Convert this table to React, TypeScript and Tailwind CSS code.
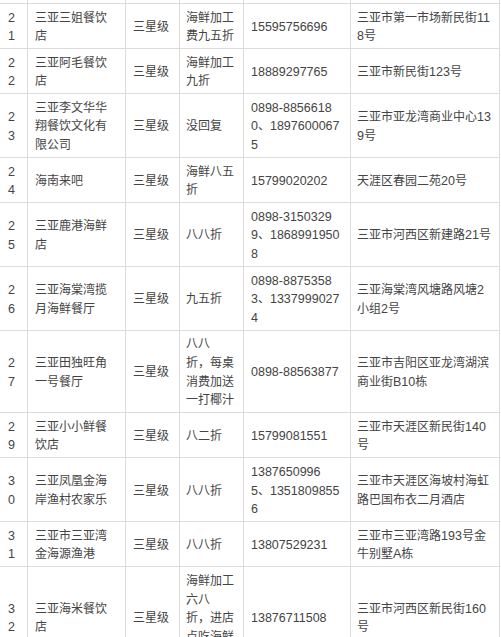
type Row = string[][];

// each cell is written as its wrapped lines, as they break in the source table
const rows: Row[] = [
  [["2", "1"], ["三亚三姐餐饮", "店"], ["三星级"], ["海鲜加工", "费九五折"], ["15595756696"], ["三亚市第一市场新民街11", "8号"]],
  [["2", "2"], ["三亚阿毛餐饮", "店"], ["三星级"], ["海鲜加工", "九折"], ["18889297765"], ["三亚市新民街123号"]],
  [
    ["2", "3"],
    ["三亚李文华华", "翔餐饮文化有", "限公司"],
    ["三星级"],
    ["没回复"],
    ["0898-8856618", "0、1897600067", "5"],
    ["三亚市亚龙湾商业中心13", "9号"],
  ],
  [["2", "4"], ["海南来吧"], ["三星级"], ["海鲜八五", "折"], ["15799020202"], ["天涯区春园二苑20号"]],
  [["2", "5"], ["三亚鹿港海鲜", "店"], ["三星级"], ["八八折"], ["0898-3150329", "9、1868991950", "8"], ["三亚市河西区新建路21号"]],
  [
    ["2", "6"],
    ["三亚海棠湾揽", "月海鲜餐厅"],
    ["三星级"],
    ["九五折"],
    ["0898-8875358", "3、1337999027", "4"],
    ["三亚海棠湾风塘路风塘2", "小组2号"],
  ],
  [
    ["2", "7"],
    ["三亚田独旺角", "一号餐厅"],
    ["三星级"],
    ["八八", "折，每桌", "消费加送", "一打椰汁"],
    ["0898-88563877"],
    ["三亚市吉阳区亚龙湾湖滨", "商业街B10栋"],
  ],
  [["2", "9"], ["三亚小小鲜餐", "饮店"], ["三星级"], ["八二折"], ["15799081551"], ["三亚市天涯区新民街140", "号"]],
  [
    ["3", "0"],
    ["三亚凤凰金海", "岸渔村农家乐"],
    ["三星级"],
    ["八八折"],
    ["1387650996", "5、1351809855", "6"],
    ["三亚市天涯区海坡村海虹", "路巴国布衣二月酒店"],
  ],
  [["3", "1"], ["三亚市三亚湾", "金海源渔港"], ["三星级"], ["八八折"], ["13807529231"], ["三亚市三亚湾路193号金", "牛别墅A栋"]],
  [
    ["3", "2"],
    ["三亚海米餐饮", "店"],
    ["三星级"],
    ["海鲜加工", "六八", "折，进店", "点吃海鲜", "送饮料"],
    ["13876711508"],
    ["三亚市河西区新民街160", "号"],
  ],
];

const padLeft = ["pl-[8px]", "pl-[7px]", "pl-[7px]", "pl-[6px]", "pl-[7px]", "pl-[6px]"];

// latin runs are set a touch larger, like the wide digits of the source font
function Line({ text }: { text: string }) {
  const parts = text.split(/([\x00-\x7F]+)/).filter(Boolean);
  return (
    <div>
      {parts.map((p, i) =>
        /^[\x00-\x7F]+$/.test(p) ? (
          <span key={i} className="font-['Liberation_Sans',sans-serif] text-[12.5px] leading-none">
            {p}
          </span>
        ) : (
          <span key={i}>{p}</span>
        )
      )}
    </div>
  );
}

export default function App() {
  return (
    <div className="min-h-screen bg-white font-['Noto_Sans_CJK_SC','Liberation_Sans',sans-serif] text-[12px] text-[#444]">
      <div className="grid w-[500px] grid-cols-[27px_97px_53px_63px_106px_148px] gap-px bg-[#dcdcdc] pr-px">
        {/* tail of the row above, cut off by the top edge */}
        {padLeft.map((_, i) => (
          <div key={`top-${i}`} className="h-[3px] bg-white" />
        ))}

        {rows.map((row, r) =>
          row.map((lines, c) => (
            <div
              key={`${r}-${c}`}
              className={`flex flex-col justify-center whitespace-nowrap bg-white py-[3.5px] pr-[4px] leading-[18.6px] ${padLeft[c]}`}
            >
              {lines.map((l, i) => (
                <Line key={i} text={l} />
              ))}
            </div>
          ))
        )}
      </div>
    </div>
  );
}
